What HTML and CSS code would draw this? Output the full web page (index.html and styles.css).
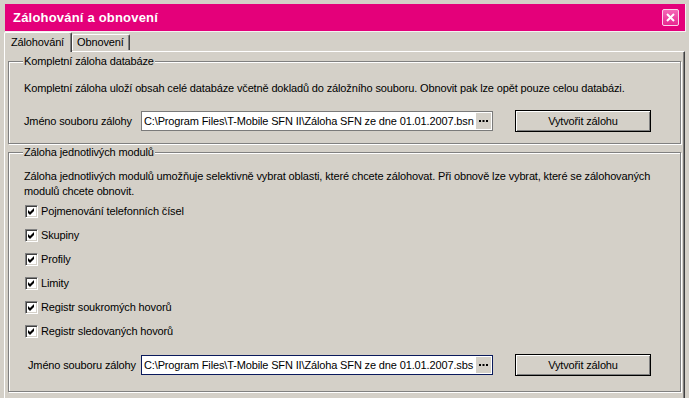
FILE: index.html
```html
<!DOCTYPE html>
<html lang="cs">
<head>
    <meta charset="UTF-8">
    <title>Zálohování a obnovení</title>
    <link rel="stylesheet" href="styles.css">
</head>
<body>
    <div class="window">
        <div class="titlebar">
            <span class="title">Zálohování a obnovení</span>
            <button class="close" type="button">
                <svg width="17" height="17" viewBox="0 0 17 17">
                    <defs>
                        <linearGradient id="closeFill" x1="0" y1="0" x2="0" y2="1">
                            <stop offset="0" stop-color="#f56ab8"/>
                            <stop offset="1" stop-color="#e8248f"/>
                        </linearGradient>
                    </defs>
                    <rect x="0.5" y="0.5" width="16" height="16" rx="1.5" fill="url(#closeFill)" stroke="#fbd3ea"/>
                    <path d="M5 5 L12 12 M12 5 L5 12" stroke="#fff" stroke-width="2"/>
                </svg>
            </button>
        </div>

        <div class="tabs">
            <div class="tab active">Zálohování</div>
            <div class="tab">Obnovení</div>
        </div>

        <div class="panel">
            <fieldset class="group group-full">
                <legend>Kompletní záloha databáze</legend>
                <p class="desc">Kompletní záloha uloží obsah celé databáze včetně dokladů do záložního souboru. Obnovit pak lze opět pouze celou databázi.</p>
                <div class="file-row">
                    <span class="file-label">Jméno souboru zálohy</span>
                    <div class="file-input">
                        <span class="path">C:\Program Files\T-Mobile SFN II\Záloha SFN ze dne 01.01.2007.bsn</span>
                        <span class="browse">
                            <svg width="9" height="2" viewBox="0 0 9 2"><rect x="0" y="0" width="2" height="2"/><rect x="3.5" y="0" width="2" height="2"/><rect x="7" y="0" width="2" height="2"/></svg>
                        </span>
                    </div>
                    <button class="btn" type="button">Vytvořit zálohu</button>
                </div>
            </fieldset>

            <fieldset class="group group-modules">
                <legend>Záloha jednotlivých modulů</legend>
                <p class="desc">Záloha jednotlivých modulů umožňuje selektivně vybrat oblasti, které chcete zálohovat. Při obnově lze vybrat, které se zálohovaných<br>modulů chcete obnovit.</p>
                <ul class="checks">
                    <li><span class="box"><svg width="13" height="13" viewBox="0 0 13 13"><path d="M3 5 L5 7 L9 3 L9 6 L5 10 L3 8 Z"/></svg></span>Pojmenování telefonních čísel</li>
                    <li><span class="box"><svg width="13" height="13" viewBox="0 0 13 13"><path d="M3 5 L5 7 L9 3 L9 6 L5 10 L3 8 Z"/></svg></span>Skupiny</li>
                    <li><span class="box"><svg width="13" height="13" viewBox="0 0 13 13"><path d="M3 5 L5 7 L9 3 L9 6 L5 10 L3 8 Z"/></svg></span>Profily</li>
                    <li><span class="box"><svg width="13" height="13" viewBox="0 0 13 13"><path d="M3 5 L5 7 L9 3 L9 6 L5 10 L3 8 Z"/></svg></span>Limity</li>
                    <li><span class="box"><svg width="13" height="13" viewBox="0 0 13 13"><path d="M3 5 L5 7 L9 3 L9 6 L5 10 L3 8 Z"/></svg></span>Registr soukromých hovorů</li>
                    <li><span class="box"><svg width="13" height="13" viewBox="0 0 13 13"><path d="M3 5 L5 7 L9 3 L9 6 L5 10 L3 8 Z"/></svg></span>Registr sledovaných hovorů</li>
                </ul>
                <div class="file-row">
                    <span class="file-label">Jméno souboru zálohy</span>
                    <div class="file-input focused">
                        <span class="path">C:\Program Files\T-Mobile SFN II\Záloha SFN ze dne 01.01.2007.sbs</span>
                        <span class="browse">
                            <svg width="9" height="2" viewBox="0 0 9 2"><rect x="0" y="0" width="2" height="2"/><rect x="3.5" y="0" width="2" height="2"/><rect x="7" y="0" width="2" height="2"/></svg>
                        </span>
                    </div>
                    <button class="btn" type="button">Vytvořit zálohu</button>
                </div>
            </fieldset>
        </div>
    </div>
</body>
</html>
```

FILE: styles.css
```css
body {
    margin: 0;
    background-color: #d4d0c8;
    font-family: "Liberation Sans", Arial, sans-serif;
    font-size: 11px;
    letter-spacing: -0.14px;
    color: #000;
}
.window {
    width: 689px;
    height: 398px;
    padding-top: 4px;
    box-sizing: border-box;
    overflow: hidden;
}

/* title bar */
.titlebar {
    display: flex;
    align-items: center;
    height: 27px;
    margin: 0 3px 0 5px;
    padding: 0 6px 0 8px;
    background-color: #e4007a;
    border-right: 1px solid #f4f0f2;
    border-bottom: 1px solid #f4f0f2;
}
.title {
    flex: 1;
    color: #fff;
    font-weight: bold;
    font-size: 13px;
    letter-spacing: 0.2px;
}
.close {
    display: block;
    width: 17px;
    height: 17px;
    padding: 0;
    border: none;
    background: none;
}
.close svg {
    display: block;
}

/* tabs */
.tabs {
    display: flex;
    align-items: flex-end;
    height: 19px;
    margin-left: 4px;
    position: relative;
    z-index: 1;
}
.tab {
    height: 15px;
    line-height: 15px;
    padding: 0 5px 0 4px;
    border-left: 1px solid #fff;
    border-top: 1px solid #fff;
    border-right: 1px solid #404040;
    border-radius: 2px 2px 0 0;
    box-shadow: inset -1px 0 0 #808080;
    margin-bottom: 1px;
}
.tab.active {
    height: 19px;
    line-height: 19px;
    padding: 0 7px 0 6px;
    margin-bottom: -1px;
    background-color: #d4d0c8;
}

/* panel */
.panel {
    margin-left: 4px;
    width: 681px;
    height: 400px;
    box-sizing: border-box;
    border-top: 1px solid #fff;
    border-left: 1px solid #fff;
    border-right: 1px solid #404040;
    box-shadow: inset -1px 0 0 #808080;
    padding: 3px 0 0 3px;
}

/* group boxes */
.group {
    width: 673px;
    box-sizing: border-box;
    margin: 0;
    padding: 0 0 0 15px;
    min-width: 0;
    border: 1px solid #808080;
    box-shadow: inset 1px 1px 0 #fff, 1px 1px 0 #fff;
}
.group legend {
    padding: 0 1px;
    margin-left: -1px;
    line-height: 13px;
    background-color: #d4d0c8;
}
.desc {
    margin: 0;
    line-height: 13px;
}
.group-full {
    padding-top: 14px;
    padding-bottom: 11px;
}
.group-full .file-row {
    margin-top: 15px;
}
.group-modules {
    margin-top: 2px;
    padding-top: 10px;
    padding-bottom: 15px;
}
.group-modules .desc {
    line-height: 15px;
}

/* checkbox list */
.checks {
    list-style: none;
    margin: 0;
    padding: 0;
}
.checks li {
    display: flex;
    align-items: center;
    height: 24px;
}
.box {
    display: block;
    width: 13px;
    height: 13px;
    box-sizing: border-box;
    margin: 0 3px 0 1px;
    background-color: #fff;
    border-top: 1px solid #808080;
    border-left: 1px solid #808080;
    border-right: 1px solid #fff;
    border-bottom: 1px solid #fff;
    box-shadow: inset 1px 1px 0 #404040, inset -1px -1px 0 #d4d0c8;
}
.box svg {
    display: block;
    margin: -1px 0 0 -1px;
}

/* file row */
.file-row {
    display: flex;
    align-items: center;
    height: 22px;
}
.file-label {
    width: 117px;
    flex-shrink: 0;
}
.group-modules .file-row {
    margin-top: 11px;
}
.group-modules .file-label {
    width: 113px;
    padding-left: 4px;
}
.file-input {
    display: flex;
    align-items: stretch;
    width: 352px;
    height: 20px;
    box-sizing: border-box;
    border: 1px solid #7a7a7a;
    background-color: #fff;
    padding: 1px;
}
.file-input.focused {
    border-color: #0a1a5c;
}
.path {
    flex: 1;
    line-height: 16px;
    padding-left: 1px;
    white-space: nowrap;
    overflow: hidden;
}
.browse {
    display: flex;
    align-items: center;
    justify-content: center;
    width: 15px;
    background-color: #d4d0c8;
}
.browse svg {
    display: block;
}
.btn {
    width: 136px;
    height: 22px;
    margin-left: 22px;
    padding: 0;
    font-family: inherit;
    font-size: 11px;
    letter-spacing: inherit;
    color: #000;
    background-color: #d4d0c8;
    border: 1px solid #000;
    box-shadow: inset 1px 1px 0 #fff, inset -1px -1px 0 #808080;
}
```
